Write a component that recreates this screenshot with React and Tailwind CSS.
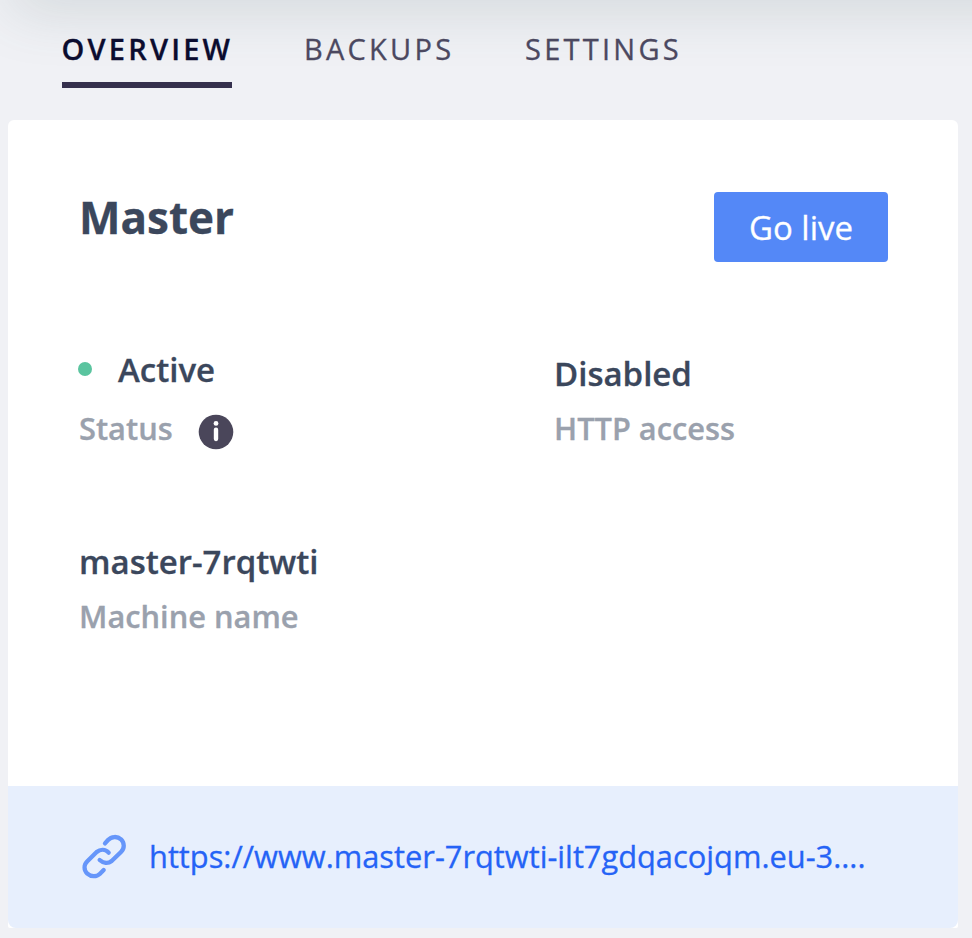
const tabs = [
  { label: "OVERVIEW", cls: "w-[170px] mr-[72px] font-semibold text-[#0b0c2f] border-[#35304d] tracking-[3.2px] -indent-[0.5px]" },
  { label: "BACKUPS", cls: "w-[148px] mr-[73px] text-[#4b4860] border-transparent tracking-[3.25px]" },
  { label: "SETTINGS", cls: "w-[156px] text-[#4b4860] border-transparent tracking-[3.25px]" },
];

function LinkIcon() {
  return (
    <svg className="mb-[2px] h-12 w-12 shrink-0" viewBox="60 51 144 144" fill="none" stroke="#6696fa" strokeWidth="13" strokeLinecap="round" strokeLinejoin="round">
      <path d="M135 85L144 75C154 64 172 63 183 73C194 84 194 100 183 111L155 138C144 147 130 145 119 135" />
      <path d="M146 113C136 102 121 102 110 111L82 139C71 150 71 165 82 176C93 186 110 186 120 176L131 165" />
    </svg>
  );
}

function InfoIcon() {
  return (
    <svg className="mt-[3px] h-[36px] w-[36px] shrink-0" viewBox="0 0 36 36">
      <circle cx="18" cy="18" r="17.3" fill="#4a465a" />
      <circle cx="18" cy="9.4" r="2.4" fill="#fff" />
      <rect x="15.8" y="13.6" width="4.4" height="13.6" rx="2.1" fill="#fff" />
    </svg>
  );
}

export default function App() {
  return (
    <div className="relative h-[938px] w-[972px] overflow-hidden bg-[#f0f1f5] font-['Open_Sans',sans-serif] [-webkit-text-stroke:0.3px]">
      <div className="absolute -top-10 left-4 h-10 w-[1100px] shadow-[0_2px_60px_4px_rgba(70,100,100,0.21)]" />
      <nav className="relative flex h-[120px] pl-[62px] pt-7">
        {tabs.map((t) => (
          <div key={t.label} className={`h-[60px] whitespace-nowrap border-b-6 text-[29px] leading-[42px] ${t.cls}`}>
            {t.label}
          </div>
        ))}
      </nav>
      <main className="relative ml-2 flex h-[808px] w-[950px] flex-col overflow-hidden rounded-t-md rounded-b-[2px] bg-white">
        <div className="flex h-[666px] flex-col pl-[71px] pr-[70px] pt-[72px]">
          <div className="flex h-[150px] items-start justify-between">
            <h1 className="text-[44px] font-bold leading-[51px] text-[#3b475c]">Master</h1>
            <button className="h-[70px] w-[174px] rounded bg-[#5488f7] pt-px text-[33px] leading-[70px] text-white">Go live</button>
          </div>
          <div className="flex h-[190px] text-[#3b475c]">
            <div className="w-[476px]">
              <div className="flex h-[56px] items-center">
                <span className="-ml-px mb-[2px] mr-[26px] h-3.5 w-3.5 rounded-full bg-[#5ac49f]" />
                <span className="text-[33px] font-semibold leading-[56px]">Active</span>
              </div>
              <div className="flex h-[64px] items-center">
                <span className="mb-[4px] w-[119px] text-[30.8px] font-semibold leading-[60px] text-[#9aa1ad]">Status</span>
                <InfoIcon />
              </div>
            </div>
            <div className="-ml-px">
              <div className="text-[33px] font-semibold leading-[64px]">Disabled</div>
              <div className="text-[30.8px] font-semibold leading-[44px] text-[#9aa1ad]">HTTP access</div>
            </div>
          </div>
          <div className="text-[33px] font-semibold leading-[60px] text-[#3b475c]">master-7rqtwti</div>
          <div className="text-[30.8px] font-semibold leading-[48px] text-[#9aa1ad]">Machine name</div>
        </div>
        <div className="flex h-[142px] items-center rounded-b-lg bg-[#e7effd] pl-[72px]">
          <LinkIcon />
          <a className="mb-[2px] ml-[21px] whitespace-nowrap text-[30.8px] leading-[44px] text-[#2563f6]">https://www.master-7rqtwti-ilt7gdqacojqm.eu-3....</a>
        </div>
      </main>
    </div>
  );
}
